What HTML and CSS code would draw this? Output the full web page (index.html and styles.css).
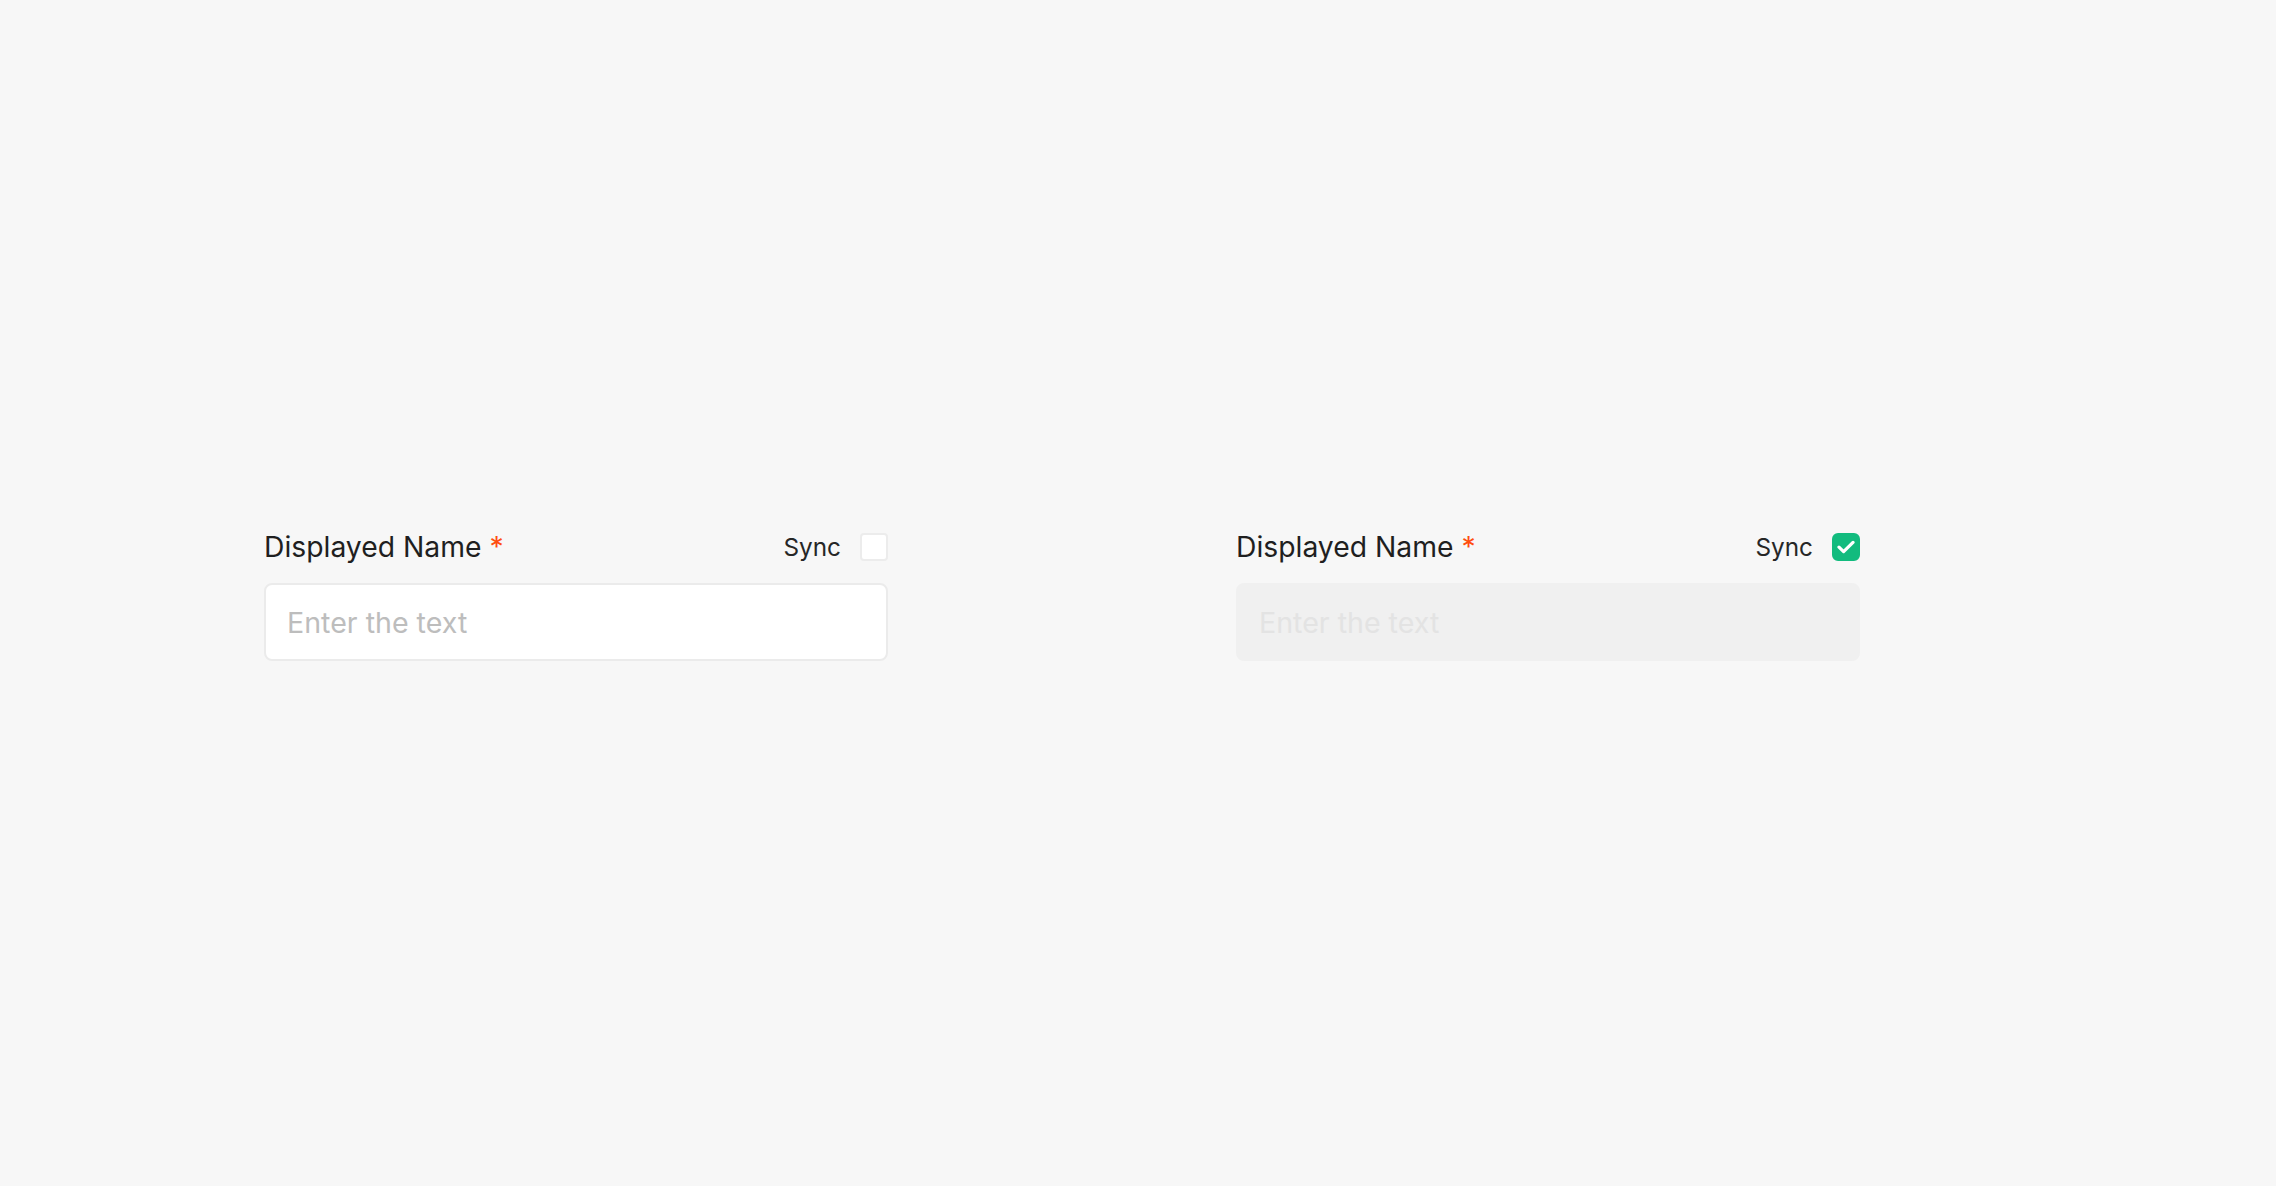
FILE: index.html
```html
<!DOCTYPE html>
<html lang="en">
<head>
    <meta charset="UTF-8">
    <meta name="viewport" content="width=device-width, initial-scale=1.0">
    <title>Displayed Name</title>
    <link rel="stylesheet" href="styles.css">
</head>
<body>
    <div class="canvas">
        <div class="field">
            <div class="field-head">
                <label class="field-label" for="nameA">Displayed Name <span class="required">*</span></label>
                <label class="sync">
                    <span class="sync-text">Sync</span>
                    <span class="check"></span>
                </label>
            </div>
            <input type="text" id="nameA" class="text-input" placeholder="Enter the text">
        </div>

        <div class="field">
            <div class="field-head">
                <label class="field-label" for="nameB">Displayed Name <span class="required">*</span></label>
                <label class="sync">
                    <span class="sync-text">Sync</span>
                    <span class="check checked">
                        <svg width="18" height="14" viewBox="0 0 18 14">
                            <path d="M2 7.2 L6.6 11.6 L16 2.4" fill="none" stroke="#fff" stroke-width="3.2" stroke-linecap="round" stroke-linejoin="round"/>
                        </svg>
                    </span>
                </label>
            </div>
            <input type="text" id="nameB" class="text-input" placeholder="Enter the text" disabled>
        </div>
    </div>
</body>
</html>
```

FILE: styles.css
```css
body {
    font-family: 'Inter', 'Noto Sans', sans-serif;
    background-color: #f7f7f7;
    margin: 0;
    padding: 0;
}

.canvas {
    height: 1186px;
    display: flex;
    align-items: center;
    gap: 348px;
    padding-left: 264px;
    box-sizing: border-box;
}

.field {
    width: 624px;
    display: flex;
    flex-direction: column;
    gap: 16px;
}

.field-head {
    display: flex;
    align-items: center;
    justify-content: space-between;
    height: 40px;
    padding-top: 2px;
}

.field-label {
    font-size: 28.3px;
    font-weight: 400;
    color: #1f1f1f;
}

.required {
    color: #ff4d0f;
}

.sync {
    display: flex;
    align-items: center;
    gap: 19px;
}

.sync-text {
    font-size: 24.3px;
    color: #262626;
}

.check {
    width: 28px;
    height: 28px;
    box-sizing: border-box;
    border: 2px solid #ececec;
    border-radius: 4px;
    background-color: #fff;
    display: flex;
    align-items: center;
    justify-content: center;
}

.check.checked {
    background-color: #12bb7e;
    border-color: #12bb7e;
    border-radius: 6px;
}

.text-input {
    height: 78px;
    box-sizing: border-box;
    border: 2px solid #ebebeb;
    border-radius: 8px;
    background-color: #fff;
    padding: 0 20px 0 21px;
    font-family: inherit;
    font-size: 28.6px;
    color: #1f1f1f;
    outline: none;
}

.text-input::placeholder {
    color: #bdbdbd;
}

.text-input:disabled {
    background-color: #f0f0f0;
    border-color: #f0f0f0;
}

.text-input:disabled::placeholder {
    color: #e3e3e3;
}
```
